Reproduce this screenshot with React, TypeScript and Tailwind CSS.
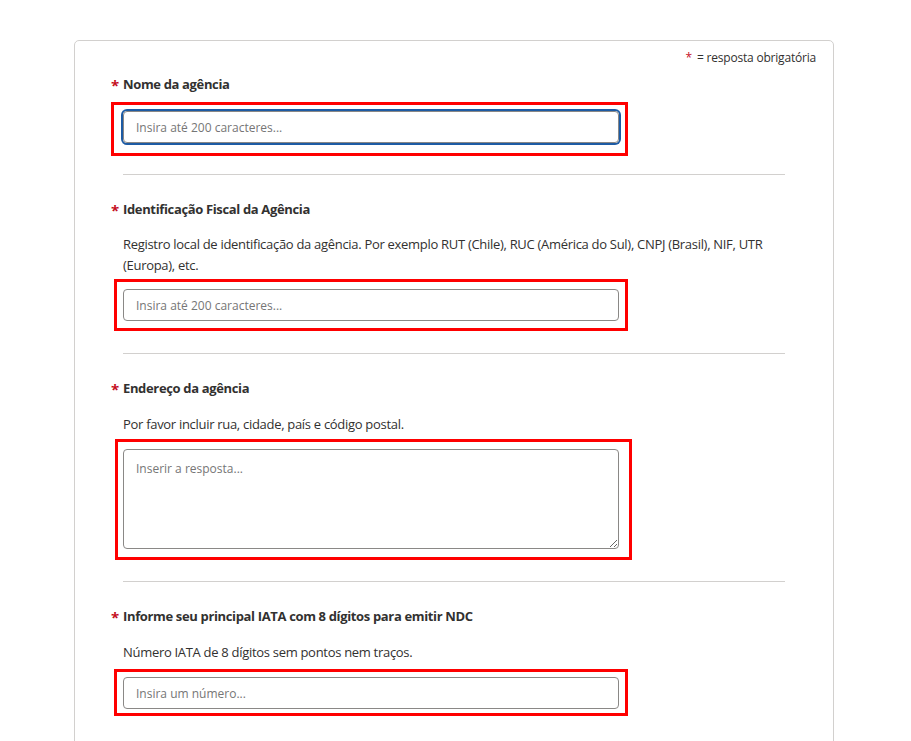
import React from 'react';

const font = { fontFamily: '"Open Sans", "Noto Sans", Arial, sans-serif' };

function Label({ children }: { children: React.ReactNode }) {
  return (
    <div className="relative text-[13px] leading-5 font-bold tracking-[-0.35px] text-[#323130]">
      <span className="absolute -left-[12px] top-[1px] text-[15px] tracking-normal text-[#c50f1f]">*</span>
      {children}
    </div>
  );
}

const inputCls =
  'h-8 w-[496px] rounded-[4px] border border-[#8a8886] px-3 text-[12px] text-[#323130] placeholder:text-[#767676] outline-none';

export default function App() {
  return (
    <div className="min-h-screen bg-white" style={font}>
      <div className="ml-[74px] mt-10 w-[760px] rounded-[5px] border border-[#d2d0ce] bg-white pt-[9px] pb-10">
        {/* Required legend */}
        <div className="flex justify-end pr-[17px] text-[12px] leading-4 tracking-[-0.2px] text-[#323130]">
          <span className="mr-[5px] text-[#c50f1f]">*</span>= resposta obrigatória
        </div>

        <div className="pl-[48px] pr-12">
          {/* Nome da agência */}
          <section className="pt-[8px]">
            <Label>Nome da agência</Label>
            <div className="-ml-[12px] mt-[8px] w-fit border-[3px] border-[#ff0000] pl-[9px] pr-[6px] pt-[6px] pb-[10px]">
              <input className={`${inputCls} shadow-[0_0_0_2px_#1d5ba4]`} placeholder="Insira até 200 caracteres..." />
            </div>
          </section>

          <hr className="mt-[18px] border-t border-[#d2d0ce]" />

          {/* Identificação Fiscal */}
          <section className="pt-[24px]">
            <Label>Identificação Fiscal da Agência</Label>
            <p className="mt-[15px] text-[13px] leading-[21px] tracking-[-0.3px] text-[#323130]">
              Registro local de identificação da agência. Por exemplo RUT (Chile), RUC (América do Sul), CNPJ (Brasil), NIF, UTR (Europa), etc.
            </p>
            <div className="-ml-[9px] mt-[3px] w-fit border-[3px] border-[#ff0000] px-[6px] pt-[7px] pb-[7px]">
              <input className={inputCls} placeholder="Insira até 200 caracteres..." />
            </div>
          </section>

          <hr className="mt-[22px] border-t border-[#d2d0ce]" />

          {/* Endereço */}
          <section className="pt-[24px]">
            <Label>Endereço da agência</Label>
            <p className="mt-[16px] text-[13px] leading-[21px] tracking-[-0.3px] text-[#323130]">
              Por favor incluir rua, cidade, país e código postal.
            </p>
            <div className="-ml-[8px] mt-[4px] w-fit border-[3px] border-[#ff0000] pl-[5px] pr-[10px] pt-[7px] pb-[8px]">
              <textarea
                className="block h-[100px] w-[496px] rounded-[4px] border border-[#8a8886] px-3 py-[9px] text-[12px] leading-5 text-[#323130] placeholder:text-[#767676] outline-none"
                placeholder="Inserir a resposta..."
              />
            </div>
          </section>

          <hr className="mt-[21px] border-t border-[#d2d0ce]" />

          {/* IATA */}
          <section className="pt-[24px]">
            <Label>Informe seu principal IATA com 8 dígitos para emitir NDC</Label>
            <p className="mt-[16px] text-[13px] leading-[21px] tracking-[-0.3px] text-[#323130]">
              Número IATA de 8 dígitos sem pontos nem traços.
            </p>
            <div className="-ml-[9px] mt-[6px] w-fit border-[3px] border-[#ff0000] px-[6px] pt-[5px] pb-[4px]">
              <input className={inputCls} placeholder="Insira um número..." />
            </div>
          </section>
        </div>
      </div>
    </div>
  );
}
